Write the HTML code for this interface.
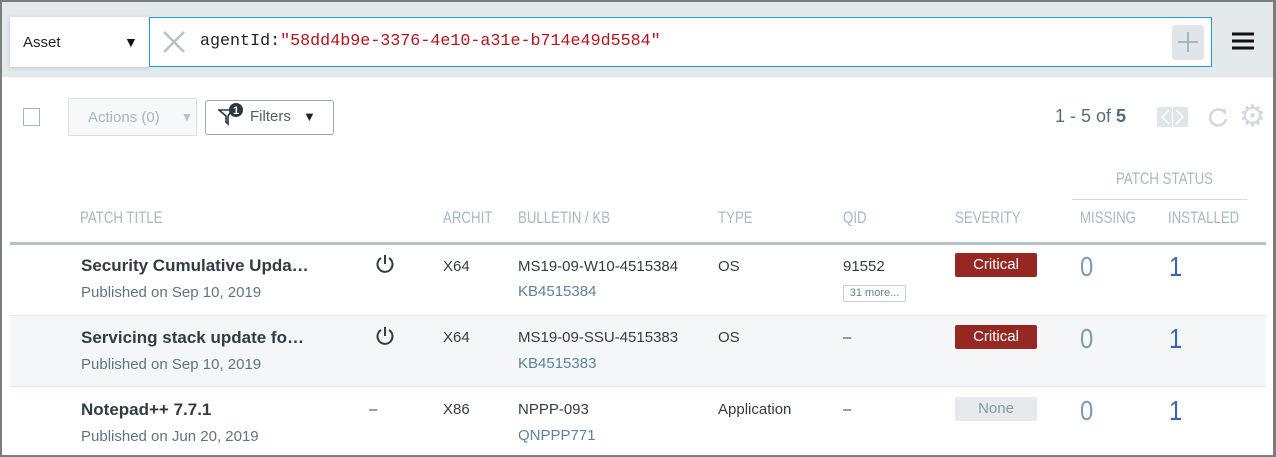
<!DOCTYPE html>
<html><head><style>
*{margin:0;padding:0;box-sizing:border-box}
body{width:1276px;height:457px;overflow:hidden;background:#fff;font-family:"Liberation Sans",sans-serif;position:relative}
.frame{position:absolute;left:0;top:0;width:1276px;height:457px;border:2px solid #7d7d7d;border-right-width:3px;pointer-events:none;z-index:10}
.a{position:absolute;white-space:nowrap}
.hdr{position:absolute;left:0;top:0;width:1276px;height:77px;background:#e4e9ec}
.h{font-family:"Liberation Sans",sans-serif;color:#a9b8c4;font-size:17px;transform:scaleX(.78);transform-origin:left}
.t{font-weight:bold;font-size:17px;color:#333c44}
.s{font-size:15px;color:#5f7384}
.d{font-size:15px;color:#333c44}
.k{font-size:15px;color:#5f8496}
.crit{position:absolute;width:82px;height:24px;background:#962823;color:#fff;border-radius:2px;font-size:15px;text-align:center;line-height:23px}
.none{background:#e6eaed;color:#8a969f}
.z{font-size:28px;color:#7d9cb0;transform:scaleX(.85);transform-origin:left}
.o{font-size:28px;color:#3a67a6;transform:scaleX(.85);transform-origin:left}
</style></head><body>
<div class="hdr"></div>
<div class="a" style="left:10px;top:17px;width:140px;height:50px;background:#fff;box-shadow:0 1px 4px rgba(0,0,0,.15)"></div>
<div class="a" style="left:23px;top:34px;font-size:15px;color:#222">Asset</div>
<div class="a" style="left:124px;top:34px;font-size:14px;color:#111">▼</div>
<div class="a" style="left:149px;top:17px;width:1063px;height:50px;background:#fff;border:1px solid #1a9ae0"></div>
<svg class="a" style="left:162px;top:30px" width="24" height="24"><path d="M2 2L22 22M22 2L2 22" stroke="#b8c2c8" stroke-width="2.5"/></svg>
<div class="a" style="left:200px;top:32px;font-family:'Liberation Mono',monospace;font-size:16.7px;color:#222">agentId:<span style="color:#b3141b">"58dd4b9e-3376-4e10-a31e-b714e49d5584"</span></div>
<div class="a" style="left:1172px;top:25px;width:32px;height:35px;background:#dfe5e9;border-radius:3px"></div>
<svg class="a" style="left:1177px;top:31px" width="22" height="22"><path d="M11 1V21M1 11H21" stroke="#a9b5bd" stroke-width="2"/></svg>
<svg class="a" style="left:1232px;top:32px" width="22" height="18"><path d="M0 2H22M0 9H22M0 16H22" stroke="#111" stroke-width="3"/></svg>

<div class="a" style="left:23px;top:108px;width:17px;height:18px;border:1px solid #a9b2b8"></div>
<div class="a" style="left:68px;top:98px;width:129px;height:38px;border:1px solid #d8dee2;background:#f6f8f9;border-radius:2px"></div>
<div class="a" style="left:88px;top:109px;font-size:15px;color:#a9b5be">Actions (0)</div>
<div class="a" style="left:181px;top:110px;font-size:12px;color:#b5bfc6">▼</div>
<div class="a" style="left:205px;top:100px;width:129px;height:35px;border:1px solid #9aa8b2;border-radius:3px"></div>
<svg class="a" style="left:218px;top:102px" width="28" height="24"><path d="M1 8H14L10 14V22L8 20V14Z" fill="none" stroke="#2d3740" stroke-width="1.6"/><circle cx="18" cy="8" r="7" fill="#2d3740"/><text x="18" y="12" font-size="11" font-weight="bold" fill="#fff" text-anchor="middle" font-family="Liberation Sans">1</text></svg>
<div class="a" style="left:250px;top:108px;font-size:15px;color:#4f5f6b">Filters</div>
<div class="a" style="left:303px;top:109px;font-size:13px;color:#222">▼</div>
<div class="a" style="left:1055px;top:106px;font-size:18px;color:#5a6e7d">1 - 5 of <b style="color:#4f6b80">5</b></div>
<div class="a" style="left:1157px;top:107px;width:31px;height:20px;background:#dfe5e9"></div>
<svg class="a" style="left:1157px;top:107px" width="31" height="20"><path d="M12 3L5 10L12 17M19 3L26 10L19 17" fill="none" stroke="#fff" stroke-width="1.5"/><path d="M15.5 0V20" stroke="#fff"/></svg>
<svg class="a" style="left:1208px;top:107px" width="21" height="21"><path d="M16 5A8 8 0 1 0 18 12" fill="none" stroke="#d3d9dd" stroke-width="2.5"/><path d="M12 2H18V8Z" fill="#d3d9dd"/></svg>
<div class="a" style="left:1239px;top:99px;font-size:30px;color:#d3d9dd">⚙</div>

<div class="a h" style="left:1116px;top:169px">PATCH STATUS</div>
<div class="a" style="left:1072px;top:199px;width:175px;height:1px;background:#d3d8dc"></div>
<div class="a h" style="left:80px;top:208px">PATCH TITLE</div>
<div class="a h" style="left:443px;top:208px">ARCHIT</div>
<div class="a h" style="left:518px;top:208px">BULLETIN / KB</div>
<div class="a h" style="left:718px;top:208px">TYPE</div>
<div class="a h" style="left:843px;top:208px">QID</div>
<div class="a h" style="left:955px;top:208px">SEVERITY</div>
<div class="a h" style="left:1080px;top:208px">MISSING</div>
<div class="a h" style="left:1168px;top:208px">INSTALLED</div>
<div class="a" style="left:10px;top:242px;width:1256px;height:3px;background:#b3c1c9"></div>

<div class="a" style="left:10px;top:315px;width:1256px;height:72px;background:#f5f6f8;border-top:1px solid #e3e7ea;border-bottom:1px solid #e3e7ea"></div>

<div class="a t" style="left:81px;top:256px">Security Cumulative Upda…</div>
<div class="a s" style="left:81px;top:284px">Published on Sep 10, 2019</div>
<svg class="a" style="left:374px;top:253px" width="22" height="22"><path d="M7 5A7.5 7.5 0 1 0 15 5M11 2V11" fill="none" stroke="#333c44" stroke-width="2"/></svg>
<div class="a d" style="left:443px;top:258px">X64</div>
<div class="a d" style="left:518px;top:258px">MS19-09-W10-4515384</div>
<div class="a k" style="left:518px;top:283px">KB4515384</div>
<div class="a d" style="left:718px;top:258px">OS</div>
<div class="a d" style="left:843px;top:258px">91552</div>
<div class="a" style="left:843px;top:285px;width:63px;height:17px;border:1px solid #c7d0d6;border-radius:2px;font-size:11px;color:#5f8496;text-align:center;line-height:15px">31 more...</div>
<div class="crit" style="left:955px;top:253px">Critical</div>
<div class="a z" style="left:1080px;top:251px">0</div>
<div class="a o" style="left:1169px;top:251px">1</div>

<div class="a t" style="left:81px;top:328px">Servicing stack update fo…</div>
<div class="a s" style="left:81px;top:356px">Published on Sep 10, 2019</div>
<svg class="a" style="left:374px;top:325px" width="22" height="22"><path d="M7 5A7.5 7.5 0 1 0 15 5M11 2V11" fill="none" stroke="#333c44" stroke-width="2"/></svg>
<div class="a d" style="left:443px;top:329px">X64</div>
<div class="a d" style="left:518px;top:329px">MS19-09-SSU-4515383</div>
<div class="a k" style="left:518px;top:355px">KB4515383</div>
<div class="a d" style="left:718px;top:329px">OS</div>
<div class="a d" style="left:843px;top:329px">–</div>
<div class="crit" style="left:955px;top:325px">Critical</div>
<div class="a z" style="left:1080px;top:323px">0</div>
<div class="a o" style="left:1169px;top:323px">1</div>

<div class="a t" style="left:81px;top:400px">Notepad++ 7.7.1</div>
<div class="a s" style="left:81px;top:428px">Published on Jun 20, 2019</div>
<div class="a d" style="left:369px;top:401px">–</div>
<div class="a d" style="left:443px;top:401px">X86</div>
<div class="a d" style="left:518px;top:401px">NPPP-093</div>
<div class="a k" style="left:518px;top:427px">QNPPP771</div>
<div class="a d" style="left:718px;top:401px">Application</div>
<div class="a d" style="left:843px;top:401px">–</div>
<div class="crit none" style="left:955px;top:397px">None</div>
<div class="a z" style="left:1080px;top:395px">0</div>
<div class="a o" style="left:1169px;top:395px">1</div>
<div class="frame"></div>
</body></html>
